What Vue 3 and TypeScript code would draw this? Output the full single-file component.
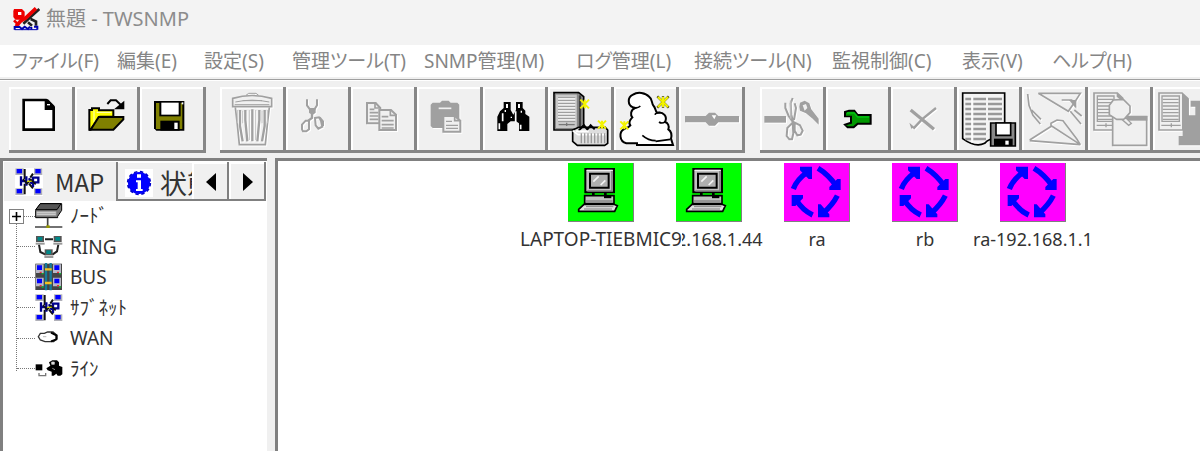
<script setup lang="ts">
type Shape = [d: string, fill: string, stroke?: string, width?: number]
interface Icon { box: string; shapes: Shape[] }
interface Tool { label: string; icon: Icon; off?: boolean }

const N = 'none'
const K = '#000'
const G = '#a0a0a0'
const F = '#f0f0f0'
const W = '#fff'
const Y = '#ff0'

const lines = (x1: number, x2: number, ys: number[]): string => ys.map((y) => `M${x1},${y}H${x2}`).join('')
const star = (x: number, y: number, r: number): string =>
  `M${x - r},${y - r}L${x + r},${y + r}M${x + r},${y - r}L${x - r},${y + r}M${x},${y - r}V${y + r}`
const box = (x: number, y: number): string => `${x} ${y} 198 198`

const groups: { name: string; tools: Tool[] }[] = [
  {
    name: 'file',
    tools: [
      { label: '新規作成', icon: { box: box(27, 21), shapes: [
        ['M71,60H138L161,83V149H71Z', W, K, 8],
        ['M134,58H144L164,78V90H134Z', K],
        ['M141,74H150', N, W, 4],
      ] } },
      { label: '開く', icon: { box: box(225, 21), shapes: [
        ['M322,72L332,61H348L362,74', N, K, 6],
        ['M373,62V88H342Z', K],
        ['M268,149V90H276V85H297V91H340V110H300L272,149Z', Y, K, 6],
        ['M282,92V126M290,97H334', N, '#ffc', 3],
        ['M272,149L296,111H370V118L340,149Z', '#808000', K, 6],
      ] } },
      { label: '保存', icon: { box: box(421, 21), shapes: [
        ['M463,63H554V152H470L463,145Z', K],
        ['M469,69H548V147H469Z', '#808000'],
        ['M479,63H543V109H479Z', K],
        ['M485,68H537V104H485Z', W],
        ['M482,122H540V152H482Z', K],
        ['M524,128H534V147H524Z', W],
        ['M546,67H551V73H546Z', W],
      ] } },
    ],
  },
  {
    name: 'edit',
    tools: [
      { label: '削除', off: true, icon: { box: box(660, 21), shapes: [
        ['M698,55Q756,38 815,55V80H698Z', F, G, 5],
        ['M706,66Q756,55 808,66M704,74H808M738,46L746,40H768L776,46M728,62H786', N, G, 3],
        ['M706,82L712,134L718,194H796L802,134L808,82', N, G, 5],
        ['M720,90V138L728,184M736,90V120L742,184M757,88V184M778,90V120L772,184M794,90V138L786,184', N, G, 7],
        ['M712,90V130M728,92V130M748,90V180M767,90V180M786,92V130M802,90V130', N, '#c4c4c4', 3],
      ] } },
      { label: '切り取り', off: true, icon: { box: box(17, 21), shapes: [
        ['M80,58V76L96,98L110,76V58', N, G, 6],
        ['M86,84H106V98L96,106L86,98Z', G],
        ['M95,102V114L84,122', N, G, 7],
        ['M76,122H86V148L78,154H68L65,148V134ZM104,114L116,112L122,122L126,140L114,146L106,136Z', N, G, 6],
        ['M118,112L128,124V138', N, G, 6],
      ] } },
      { label: 'コピー', off: true, icon: { box: box(214, 21), shapes: [
        ['M262,69H288L302,84V130H262Z', F, G, 6],
        ['M286,70V84H300', N, G, 5],
        [lines(270, 284, [88]) + lines(270, 296, [98, 108, 118]), N, G, 5],
        ['M299,90H334L349,104V150H299Z', F, G, 6],
        ['M332,90V106H348', N, G, 5],
        [lines(306, 326, [110]) + lines(306, 342, [122, 134, 144]), N, G, 5],
      ] } },
      { label: '貼り付け', off: true, icon: { box: box(411, 21), shapes: [
        ['M458,68H480L486,62H506L512,68H532L538,74V144H458L452,138V74Z', G],
        ['M476,85H514', N, F, 5],
        ['M490,108H524L541,122V155H490Z', F, G, 6],
        ['M524,108V122H540', N, G, 5],
        [lines(498, 516, [124]) + lines(498, 534, [136, 145]), N, G, 4],
      ] } },
      { label: '検索', icon: { box: box(607, 21), shapes: [
        ['M669,66H690V90L698,104L706,90V66H726V84L734,92V102L746,110V153H715V130L706,124H690L680,132V153H650V110L658,94L669,84Z', K],
        ['M676,72H682V84H676ZM712,72H718V84H712Z', W],
        ['M666,100V124M705,94V126M656,130V148M720,134V148', N, W, 5],
        ['M690,112H694M674,90V96M722,92V98', N, W, 4],
      ] } },
      { label: 'ノード追加', icon: { box: box(24, 21), shapes: [
        ['M42,38H116L131,50V136L116,150H42Z', '#909090', K, 5],
        ['M120,46V142', N, '#404040', 7],
        ['M46,42H112V146H46Z', '#c8c8c8', '#808080', 3],
        ['M54,50H106V124H54Z', '#eee'],
        [lines(54, 106, [52, 61, 70, 79, 88, 97, 106, 115, 124]), N, '#909090', 3],
        ['M56,134H104M80,128V138', N, '#777', 4],
        ['M98,150L116,142H196L203,150V190L194,196H112L98,184Z', '#ddd', K, 5],
        ['M98,152L114,164H198', N, W, 5],
        [[124, 134, 144, 154, 164, 174, 184, 194].map((x) => `M${x},160V190`).join(''), N, '#999', 4],
        ['M116,152L132,136L142,148L152,136L164,148', N, K, 6],
        ['M108,154L146,154', N, W, 6],
        [star(134, 72, 13) + star(186, 134, 12), N, '#f4f400', 6],
      ] } },
      { label: 'ネットワーク追加', icon: { box: box(221, 21), shapes: [
        ['M278,82C262,76 260,52 278,44C292,34 316,38 326,50C338,58 332,70 340,78C346,84 344,92 350,98C370,94 382,110 374,126C382,128 388,138 384,148C396,156 394,168 392,176L398,195H290V190H258C236,184 236,156 250,148C258,142 262,146 270,136C264,128 268,120 276,112C270,106 270,90 284,84Z', W, K, 6],
        ['M278,82Q292,86 300,78M360,98Q346,98 344,104M374,126Q364,132 356,126M306,166Q324,182 346,182M346,184L390,178', N, K, 5],
        [star(368, 66, 17), N, '#444400', 7],
        [star(368, 66, 15) + star(252, 136, 12), N, '#f4f400', 6],
      ] } },
      { label: 'ライン接続', off: true, icon: { box: box(418, 21), shapes: [
        ['M436,108H498L508,98H526L536,108H598V127H536L526,137H508L498,127H436Z', G],
        ['M516,106H530L524,118Z', W],
      ] } },
    ],
  },
  {
    name: 'view',
    tools: [
      { label: 'ライン切断', off: true, icon: { box: box(30, 21), shapes: [
        ['M43,108H108V128H43Z', G],
        ['M128,54L122,70L124,104L130,128M106,68V84L116,108L130,128M134,70L138,84L132,120', N, G, 6],
        ['M122,62V116', N, '#bbb', 5],
        ['M128,128L112,144L110,168L118,178H126L130,160ZM134,128L150,136L158,152L152,164L142,166L134,152Z', N, G, 6],
        ['M150,68L164,62L178,70L184,88L206,116V134L188,116L168,100L150,92L148,80Z', G],
        ['M158,76L168,72L172,84L164,92Z', F],
      ] } },
      { label: '設定', icon: { box: box(227, 21), shapes: [
        ['M284,96L296,92H312L322,105H361V131H322L310,142H292L284,134L302,128V110H284Z', '#009800', K, 6],
        ['M290,99L312,99L322,111H356', N, '#00c010', 5],
        ['M281,112H299V124H281', '#f0f0f0'],
      ] } },
      { label: '取り消し', off: true, icon: { box: box(423, 21), shapes: [
        ['M482,90L552,148', N, G, 10],
        ['M558,84L516,118L490,146', N, G, 7],
        ['M478,128L494,142L484,146Z', G],
      ] } },
      { label: 'ログ保存', icon: { box: box(21, 21), shapes: [
        ['M38,39H164V182C140,172 120,172 104,190C84,200 60,192 38,176Z', '#f4f4f4', K, 5],
        [lines(46, 64, [57, 72, 87, 102, 117, 132, 147, 162, 177]) + lines(70, 108, [57, 72, 87, 102, 117, 132, 147, 162, 177]) + lines(114, 156, [57, 72, 87, 102, 117]), N, '#999', 7],
        ['M66,50V188', N, W, 4],
        ['M122,129H196V198H122Z', '#888', K, 5],
        ['M138,129H182V166H138Z', W, K, 5],
        ['M132,176H188V198H132Z', K],
        ['M166,182H176V194H166Z', W],
      ] } },
      { label: '開始', off: true, icon: { box: box(217, 21), shapes: [
        ['M266,40H392L378,62M266,40L356,94L378,62M336,60H366L378,80', N, G, 5],
        ['M358,60H380V86Z', G],
        ['M234,42L238,76L250,106L272,132M246,90L274,118M362,94L394,132M374,90L396,108', N, G, 5],
        ['M240,180L306,138L392,194L382,178L340,122L322,120L304,130V142M240,182L392,194', N, G, 5],
      ] } },
      { label: 'ノード検索', off: true, icon: { box: box(414, 21), shapes: [
        ['M432,39H502L518,54V150H432Z', F, G, 5],
        ['M500,38L520,56V66L500,50Z', G],
        ['M442,48H492V124H442Z', F, G, 4],
        [lines(444, 490, [58, 68, 78, 88, 98, 108, 118]), N, G, 4],
        ['M440,136H498M468,130V142', N, G, 4],
        ['M488,110H590V196H488Z', F, G, 5],
        ['M530,108H592V122H530Z', G],
        ['M490,60L520,58L540,78V98L522,118H500L478,104V76Z', F, G, 5],
        ['M518,120L528,114L544,130L536,136Z', F, G, 4],
      ] } },
      { label: 'ノード停止', off: true, icon: { box: box(611, 21), shapes: [
        ['M629,39H698L716,56V150H629Z', F, G, 5],
        ['M698,38L718,58V150H698Z', G],
        ['M638,48H690V124H638Z', F, G, 4],
        [lines(640, 688, [58, 68, 78, 88, 98, 108, 118]), N, G, 4],
        ['M636,136H694M666,130V142', N, G, 4],
        ['M724,62H830V196H688V168H700V106H738V80H724Z', G],
      ] } },
    ],
  },
]

const pc = (x: number, y: number): Shape[] => [
  [`M${x},${y}h25v20h-25z`, '#b0b0b8'],
  [`M${x + 4},${y + 2}h16v13h-16z`, '#00f'],
]
const mapShapes: Shape[] = [
  ['M104,143H188V227H104Z', W],
  ...pc(105, 144), ...pc(161, 144), ...pc(105, 204), ...pc(161, 204),
  ['M133,146V176M133,190V222M158,160L150,172M158,204L146,190', N, '#111', 6],
  ['M122,168V196M122,182H138M138,168V196M146,174L154,190M158,200V172H174V186H160', N, '#00008c', 7],
  ['M128,176L140,190L152,178L166,192', N, '#111', 5],
  ['M140,183H154', N, '#cc0', 4],
]
const mapIcon: Icon = { box: '104 143 84 84', shapes: mapShapes }
const ringPc = (x: number, y: number): Shape[] => [
  [`M${x},${y}h24v18h-24z`, '#555'],
  [`M${x + 5},${y + 3}h14v11h-14z`, '#088'],
  [`M${x - 1},${y + 20}h27v6h-27z`, '#999'],
]

const tree: { name: string; icon: Icon; open?: boolean }[] = [
  { name: 'ﾉｰﾄﾞ', open: true, icon: { box: '104 143 84 84', shapes: [
    ['M120,148H184V168L172,186V190H106V168Z', '#777', K, 3],
    ['M120,148H182L170,166H106Z', '#555', K, 3],
    ['M108,171H168V184H108Z', '#aaa'],
    ['M110,174H166M110,180H166', N, '#e4e4e4', 2],
    ['M142,190V216M104,218H186', N, '#444', 5],
    ['M138,213H148V221H138Z', '#990'],
  ] } },
  { name: 'RING', icon: { box: '104 235 84 84', shapes: [
    ['M116,270L120,292L136,300M174,270L170,290L156,300M134,254H158', N, '#222', 6],
    ...ringPc(107, 244), ...ringPc(160, 244), ...ringPc(133, 284),
  ] } },
  { name: 'BUS', icon: { box: '104 12 84 84', shapes: [
    ['M105,14H185V93H105Z', '#444'],
    ['M107,16H130V42H107ZM158,16H182V42H158ZM107,56H130V82H107ZM158,56H182V82H158Z', '#b8b8c8'],
    ['M110,19H125V33H110ZM162,19H177V33H162ZM110,59H125V73H110ZM162,59H177V73H162Z', '#00f'],
    ['M137,12V94M151,12V94', N, '#157a9a', 7],
    ['M134,31H154M134,72H154', N, '#f5c020', 7],
    ['M118,40H124M170,40H176M118,80H124M170,80H176', N, '#e33', 4],
    ['M124,44H130M176,44H182M124,84H130M176,84H182', N, '#1b3', 4],
  ] } },
  { name: 'ｻﾌﾞﾈｯﾄ', icon: mapIcon },
  { name: 'WAN', icon: { box: '104 194 84 84', shapes: [
    ['M120,222H132L142,218H158L170,228V238L160,247H134L120,242L114,232Z', W, '#333', 4],
    ['M152,220L168,228V240L152,246', N, K, 6],
    ['M128,232H138', N, '#bbb', 3],
  ] } },
  { name: 'ﾗｲﾝ', icon: { box: '104 286 84 84', shapes: [
    ['M106,314H126V332H106Z', K],
    ['M116,340V348H136V340', N, '#777', 4],
    ['M138,326L150,318L146,308L156,302H170L176,308V318L186,322V344L180,348H172L168,342L160,348H154V336L142,332Z', K],
    ['M154,307H162V314H154ZM156,326L164,330', '#ddd', '#ddd', 2],
  ] } },
]

const computer: Icon = { box: '174 24 198 177', shapes: [
  ['M226,42H312V112H226Z', '#c0c0c0', K, 6],
  ['M230,46H308', N, '#eee', 4],
  ['M306,48V108H232', N, '#808080', 5],
  ['M240,56H296V98H240Z', '#b0b0b0', K, 6],
  ['M250,80L266,64M272,90L286,76', N, '#f4f4f4', 5],
  ['M250,114V122M286,114V122', N, K, 8],
  ['M224,122H312V146H224Z', '#c0c0c0', K, 5],
  ['M282,126H304', N, K, 7],
  ['M228,138H308', N, '#808080', 4],
  ['M222,148H312L322,152L314,169H206V163Z', '#e0e0e0', K, 5],
  ['M228,155H310M222,162H306', N, '#808080', 3],
] }
const ring: Icon = { box: '42 24 198 177', shapes: [
  ['M70,102Q80,74 114,50M144,40Q174,58 200,94M202,122Q188,150 158,176M128,180Q98,166 78,134', N, '#00f', 16],
  ['M90,35H126V72H116L90,46ZM212,72V105H178V96L202,72ZM144,148V187H178V178L152,148ZM65,120H99V130L76,153H65Z', '#00f'],
] }

const nodes = [
  { name: 'LAPTOP-TIEBMIC9', kind: 'host', icon: computer, x: 290, long: true },
  { name: '192.168.1.44', kind: 'host', icon: computer, x: 398, long: false },
  { name: 'ra', kind: 'ring', icon: ring, x: 506, long: false },
  { name: 'rb', kind: 'ring', icon: ring, x: 614, long: false },
  { name: 'ra-192.168.1.1', kind: 'ring', icon: ring, x: 722, long: false },
]

const menus = ['ファイル(F)', '編集(E)', '設定(S)', '管理ツール(T)', 'SNMP管理(M)', 'ログ管理(L)', '接続ツール(N)', '監視制御(C)', '表示(V)', 'ヘルプ(H)']
</script>

<template>
  <div class="window">
    <header class="title">
      <svg class="logo" viewBox="36 20 84 72" aria-hidden="true">
        <path d="M42,26H66L74,34V50L64,58H46L40,50V32Z" fill="#e00" />
        <path d="M54,35H64V44H54Z" fill="#fff" />
        <path d="M70,70L94,48L118,26M92,56L108,64V76M84,66L96,76" fill="none" stroke="#222" stroke-width="8" />
        <path d="M48,78L62,62L76,54L108,24" fill="none" stroke="#e00" stroke-width="11" />
        <path d="M42,60L54,72" fill="none" stroke="#e00" stroke-width="8" />
        <path d="M44,88V80H58M56,78L66,86L74,79L84,86L90,79M94,80V88M102,79H112V88" fill="none" stroke="#0000b0" stroke-width="6" />
        <path d="M44,88H112" fill="none" stroke="#0000b0" stroke-width="3" />
      </svg>
      <h1>無題 - TWSNMP</h1>
    </header>

    <nav class="menu">
      <button v-for="m in menus" :key="m" type="button">{{ m }}</button>
    </nav>

    <div class="toolbar">
      <div v-for="g in groups" :key="g.name" class="group" :class="g.name">
        <button v-for="t in g.tools" :key="t.label" type="button" :aria-label="t.label" :disabled="t.off">
          <svg :viewBox="t.icon.box" aria-hidden="true">
            <path v-for="(s, i) in t.icon.shapes" :key="i" :d="s[0]" :fill="s[1]" :stroke="s[2]" :stroke-width="s[3]" />
          </svg>
        </button>
      </div>
    </div>

    <main class="body">
      <aside class="side">
        <div class="tabs">
          <button type="button" class="tab current">
            <svg :viewBox="mapIcon.box" aria-hidden="true">
              <path v-for="(s, i) in mapIcon.shapes" :key="i" :d="s[0]" :fill="s[1]" :stroke="s[2]" :stroke-width="s[3]" />
            </svg>
            <span>MAP</span>
          </button>
          <button type="button" class="tab next">
            <svg viewBox="0 0 84 84" aria-hidden="true">
              <path d="M0,0H84V84H0Z" fill="#fff" />
              <circle cx="42" cy="42" r="33" fill="#00f" />
              <circle cx="42" cy="42" r="34" fill="none" stroke="#00c" stroke-width="5" stroke-dasharray="10 8" />
              <path d="M36,16H48V26H36ZM33,34H48V60H53V66H33V60H38V40H33Z" fill="#fff" />
            </svg>
            <span>状態</span>
          </button>
          <button type="button" class="scroll" aria-label="前のタブ">
            <svg viewBox="0 0 12 20" aria-hidden="true"><path d="M11,1V19L1,10Z" /></svg>
          </button>
          <button type="button" class="scroll" aria-label="次のタブ">
            <svg viewBox="0 0 12 20" aria-hidden="true"><path d="M1,1V19L11,10Z" /></svg>
          </button>
        </div>
        <ul class="tree">
          <li v-for="n in tree" :key="n.name">
            <span class="branch">
              <button v-if="n.open" type="button" aria-label="展開">
                <svg viewBox="0 0 11 11" aria-hidden="true"><path d="M1,5.5H10M5.5,1V10" stroke="#000" stroke-width="1.6" /></svg>
              </button>
            </span>
            <svg :viewBox="n.icon.box" class="kind" aria-hidden="true">
              <path v-for="(s, i) in n.icon.shapes" :key="i" :d="s[0]" :fill="s[1]" :stroke="s[2]" :stroke-width="s[3]" />
            </svg>
            <span>{{ n.name }}</span>
          </li>
        </ul>
      </aside>

      <section class="canvas">
        <div v-for="n in nodes" :key="n.name" class="node" :class="{ long: n.long }" :style="{ left: n.x + 'px' }">
          <div class="tile" :class="n.kind">
            <svg :viewBox="n.icon.box" aria-hidden="true">
              <path v-for="(s, i) in n.icon.shapes" :key="i" :d="s[0]" :fill="s[1]" :stroke="s[2]" :stroke-width="s[3]" />
            </svg>
          </div>
          <span class="name">{{ n.name }}</span>
        </div>
      </section>
    </main>
  </div>
</template>

<style>
body {
  margin: 0;
  overflow: hidden;
}
</style>

<style scoped>
.window {
  display: flex;
  flex-direction: column;
  min-height: 100vh;
  overflow: hidden;
  background: #f0f0f0;
  color: #333;
  font-family: "Noto Sans", "Noto Sans CJK JP", sans-serif;
}
button {
  margin: 0;
  padding: 0;
  border: 0;
  background: none;
  color: inherit;
  font: inherit;
}
svg {
  display: block;
  flex: none;
}
.title {
  display: flex;
  align-items: center;
  gap: 6px;
  height: 38px;
  padding: 0 12px 7px;
  background: #f3f3f3;
}
.logo {
  width: 28px;
  height: 24px;
}
h1 {
  margin: 0;
  font-size: 20px;
  font-weight: 400;
  line-height: 28px;
  color: #8c8c8c;
}
.menu {
  display: grid;
  grid-template-columns: 105px 87px 88px 132px 152px 118px 138px 130px 90px 1fr;
  height: 32px;
  padding-left: 12px;
  border-bottom: 2px solid #f0f0f0;
  background: #fff;
}
.menu button {
  font-size: 19px;
  line-height: 32px;
  text-align: left;
  white-space: nowrap;
  color: #858585;
  font-feature-settings: "palt";
}
.toolbar {
  display: flex;
  padding: 6px 0 5px 9px;
  border-top: 1px solid #a0a0a0;
  box-shadow: inset 0 1px #fff;
}
.group {
  display: flex;
  flex: none;
  padding-top: 1px;
}
.group.file {
  width: 197px;
  margin-right: 14px;
}
.group.edit {
  width: 525px;
  margin-right: 15px;
}
.group.view {
  width: 459px;
}
.group button {
  flex: 1;
  min-width: 0;
  height: 66px;
  overflow: hidden;
  box-shadow: inset -3px -3px #868686, inset 2px 2px #fff;
}
.group svg {
  width: 66px;
  height: 66px;
}
.group button:disabled svg {
  filter: drop-shadow(1px 1px #fff);
}
.body {
  display: flex;
  flex: 1;
  gap: 8px;
}
.side {
  box-sizing: border-box;
  width: 267px;
  border-top: 3px solid #808080;
  border-left: 3px solid #808080;
  background: #fff;
}
.tabs {
  display: flex;
  align-items: flex-start;
  height: 40px;
  padding: 1px 0 0 1px;
  box-sizing: border-box;
}
.tab {
  display: flex;
  align-items: center;
  box-sizing: border-box;
  background: #f0f0f0;
  font-family: "Noto Sans CJK JP", sans-serif;
  white-space: nowrap;
}
.tab svg {
  width: 28px;
  height: 28px;
}
.current {
  gap: 12px;
  width: 114px;
  height: 39px;
  padding-left: 11px;
  border-right: 2px solid #808080;
  font-size: 24px;
  line-height: 36px;
}
.next {
  gap: 7px;
  width: 74px;
  height: 38px;
  margin-top: 1px;
  padding: 4px 0 0 7px;
  border-bottom: 2px solid #808080;
  overflow: hidden;
  font-size: 27px;
  line-height: 32px;
}
.scroll {
  display: grid;
  place-items: center;
  width: 37px;
  height: 39px;
  background: #f0f0f0;
  box-shadow: inset -2px -2px #808080, inset 2px 2px #fff;
}
.scroll svg {
  width: 12px;
  height: 20px;
}
.tree {
  position: relative;
  display: grid;
  grid-auto-rows: 1fr;
  height: 183px;
  margin: 0;
  padding: 0 0 0 14px;
  list-style: none;
}
.tree::before {
  content: "";
  position: absolute;
  left: 13px;
  top: 22px;
  bottom: 13px;
  border-left: 1px dotted #777;
}
.tree li {
  display: flex;
  align-items: center;
  font-size: 19px;
  line-height: 28px;
  white-space: nowrap;
}
.branch {
  position: relative;
  width: 18px;
  border-top: 1px dotted #777;
}
.branch button {
  position: absolute;
  left: -8px;
  top: -8px;
  display: grid;
  place-items: center;
  width: 15px;
  height: 15px;
  border: 1px solid #808080;
  background: #fff;
  box-sizing: border-box;
}
.branch button svg {
  width: 11px;
  height: 11px;
}
.kind {
  width: 28px;
  height: 28px;
  margin-right: 7px;
}
.canvas {
  position: relative;
  flex: 1;
  border-top: 3px solid #808080;
  border-left: 3px solid #808080;
  background: #fff;
}
.node {
  position: absolute;
  top: 2px;
  display: flex;
  flex-direction: column;
  align-items: center;
  gap: 5px;
  width: 66px;
  font-size: 18px;
  line-height: 24px;
}
.node.long {
  z-index: 1;
  font-size: 19px;
}
.tile {
  box-sizing: border-box;
  width: 66px;
  height: 59px;
  overflow: hidden;
  border-right: 1px solid #808080;
  border-bottom: 1px solid #808080;
}
.tile svg {
  width: 66px;
  height: 59px;
}
.host {
  background: #0f0;
}
.ring {
  background: #f0f;
}
.name {
  background: #fff;
  white-space: nowrap;
}
.node:not(.long) .name {
  background: none;
}
</style>
